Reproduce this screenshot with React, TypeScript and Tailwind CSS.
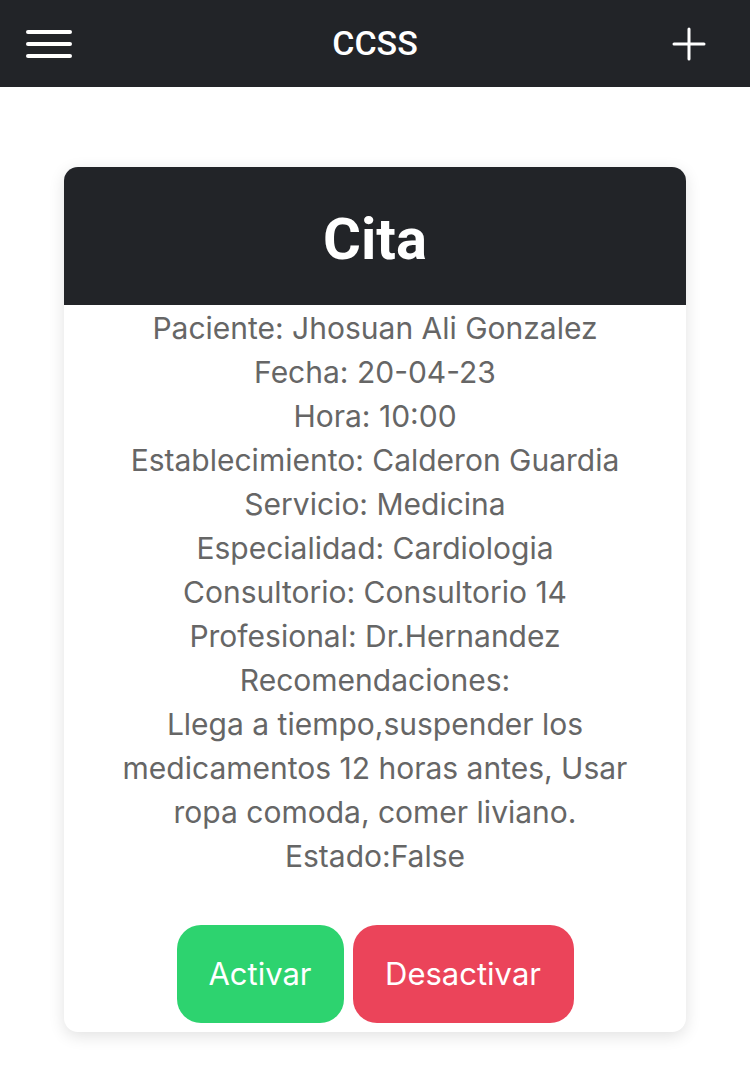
const lines = [
  'Paciente: Jhosuan Ali Gonzalez',
  'Fecha: 20-04-23',
  'Hora: 10:00',
  'Establecimiento: Calderon Guardia',
  'Servicio: Medicina',
  'Especialidad: Cardiologia',
  'Consultorio: Consultorio 14',
  'Profesional: Dr.Hernandez',
  'Recomendaciones:',
  'Llega a tiempo,suspender los',
  'medicamentos 12 horas antes, Usar',
  'ropa comoda, comer liviano.',
  'Estado:False',
];

export default function App() {
  return (
    <div className="min-h-screen bg-white font-['Inter',sans-serif]">
      <header className="h-[87px] bg-[#222428] flex items-center justify-between pl-[26px] pr-[44px]">
        <button className="w-[46px] h-[32px] flex flex-col justify-between py-[2px]">
          <span className="block h-[4px] w-full bg-white rounded-full" />
          <span className="block h-[4px] w-full bg-white rounded-full" />
          <span className="block h-[4px] w-full bg-white rounded-full" />
        </button>
        <h1 className="text-white text-[34px] font-medium font-['Roboto',sans-serif] ml-[6px]">CCSS</h1>
        <button className="w-[34px] h-[34px] flex items-center justify-center">
          <svg width="34" height="34" viewBox="0 0 34 34" fill="none" stroke="white" strokeWidth="3" strokeLinecap="round">
            <path d="M17 2v30M2 17h30" />
          </svg>
        </button>
      </header>
      <main className="px-[64px] pt-[80px]">
        <div className="bg-white rounded-[14px] overflow-hidden shadow-[0_4px_16px_rgba(0,0,0,0.12)]">
          <div className="h-[138px] bg-[#222428] flex items-center justify-center">
            <h2 className="text-white text-[58px] font-bold font-['Roboto',sans-serif] mt-[6px]">Cita</h2>
          </div>
          <div className="text-center text-[#666666] text-[30px] leading-[44px] pt-[1px]">
            {lines.map((l) => (
              <p key={l}>{l}</p>
            ))}
          </div>
          <div className="flex justify-center gap-[9px] pt-[47px] pb-[9px]">
            <button className="h-[98px] w-[167px] rounded-[24px] bg-[#2dd36f] text-white text-[31px]">
              Activar
            </button>
            <button className="h-[98px] w-[221px] rounded-[24px] bg-[#eb445a] text-white text-[31px]">
              Desactivar
            </button>
          </div>
        </div>
      </main>
    </div>
  );
}
